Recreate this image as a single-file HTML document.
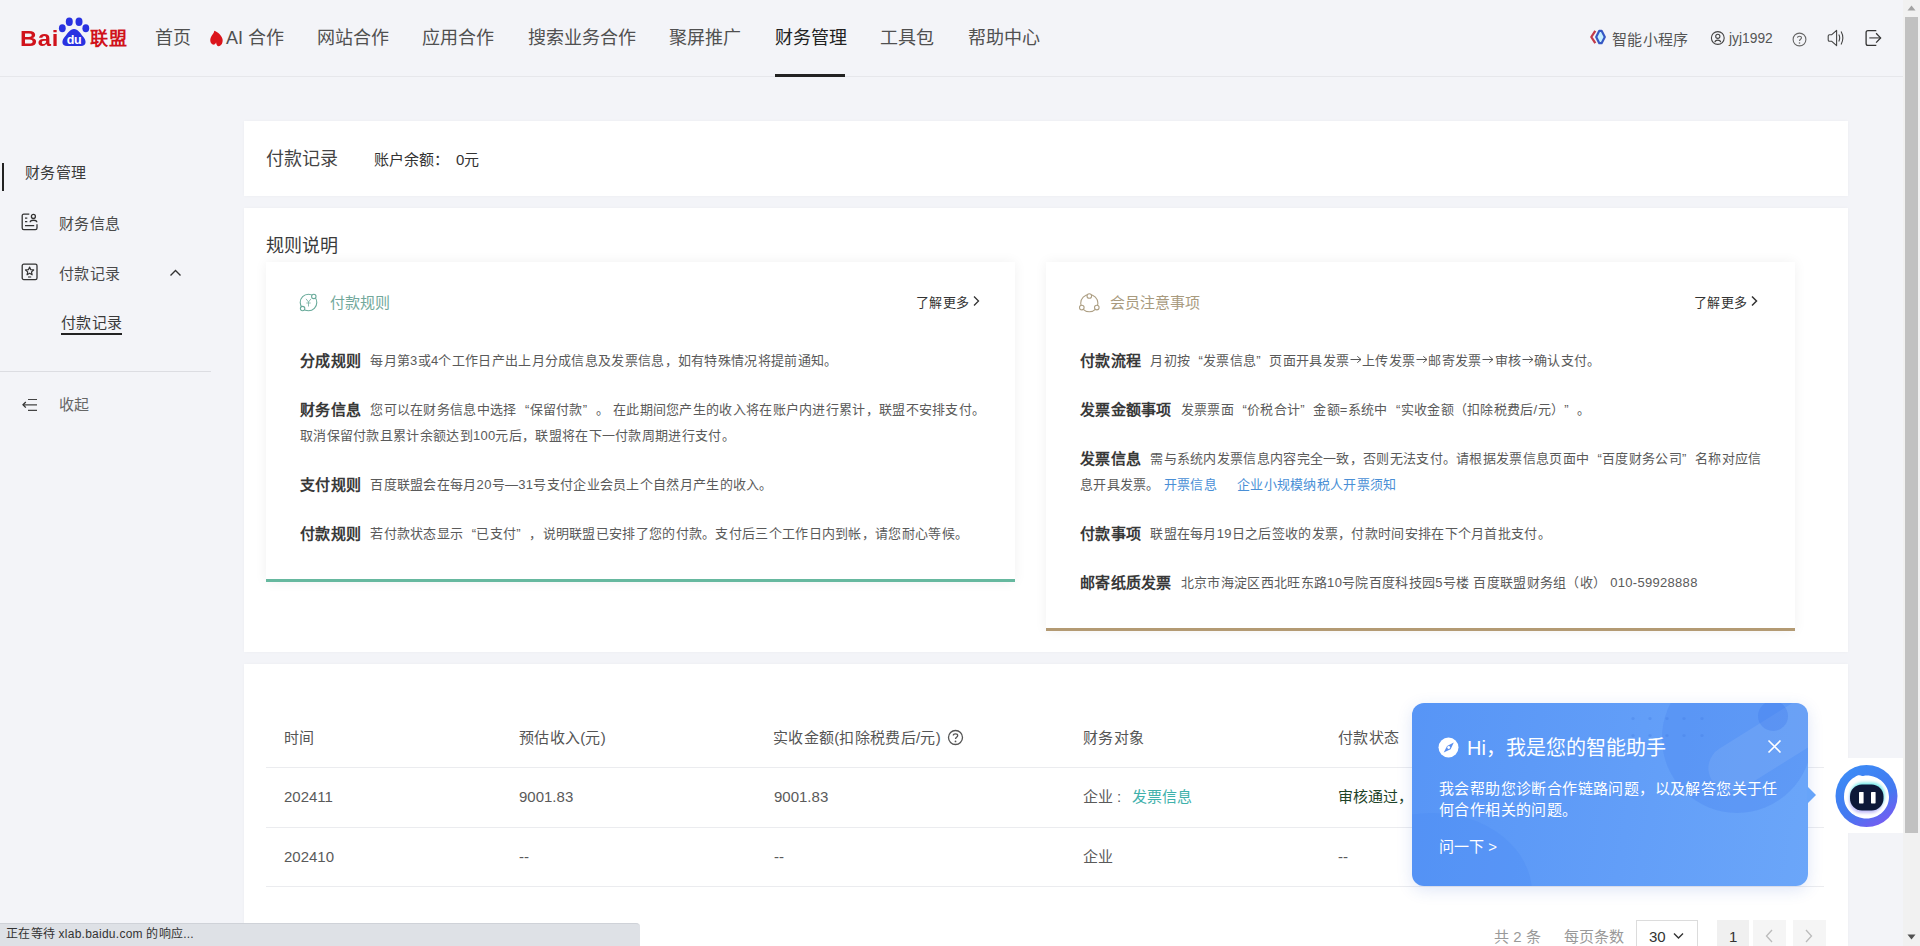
<!DOCTYPE html>
<html lang="zh-CN"><head><meta charset="utf-8">
<style>
*{margin:0;padding:0;box-sizing:border-box}
html,body{width:1920px;height:946px;overflow:hidden;background:#f3f4f8;font-family:"Liberation Sans",sans-serif;color:#333}
.a{position:absolute;white-space:nowrap}
#hdr{position:absolute;left:0;top:0;width:1903px;height:77px;border-bottom:1px solid #e6e7eb}
.nav{font-size:18px;color:#505050;line-height:18px;top:29px}
.card{position:absolute;background:#fff;box-shadow:0 0 3px rgba(0,0,0,0.03)}
.ic{position:absolute;background:#fff;box-shadow:0 0 12px rgba(0,0,0,0.06)}
.more{font-size:13px;line-height:13px;color:#333;letter-spacing:0.3px}
.rules{position:absolute;white-space:nowrap;font-size:13px;letter-spacing:0.3px;line-height:26px;color:#5a5a5a}
.rules p{margin-bottom:23px}
.rules b{font-size:15px;color:#383838;vertical-align:top;margin-right:9px;font-weight:bold}
.ql,.qr,.qc{font-style:normal;display:inline-block;width:1em}.ql{text-align:right}.qr{text-align:left}.qc{text-align:center}
.lk{color:#4a8fd6}
.th{font-size:15px;line-height:15px;color:#555;top:730px;letter-spacing:0.3px}
.td{font-size:15px;line-height:15px;color:#5a5a5a}
.pg{font-size:15px;line-height:15px;margin-top:1px}
#sb{position:absolute;left:1903px;top:0;width:17px;height:946px;background:#f1f1f1}
</style></head><body>
<div id="hdr">
  <!-- logo -->
  <div class="a" style="left:20px;top:28px;font-size:22px;font-weight:bold;color:#d0121b;line-height:22px;letter-spacing:0.6px;transform:scaleX(1.08);transform-origin:0 0">Bai</div>
  <svg class="a" style="left:57px;top:16px" width="34" height="32" viewBox="0 0 34 32">
    <ellipse cx="5.3" cy="12.3" rx="3.4" ry="4" fill="#2932e1"/>
    <ellipse cx="12.3" cy="5.8" rx="3.5" ry="4.2" fill="#2932e1"/>
    <ellipse cx="22" cy="5.8" rx="3.5" ry="4.2" fill="#2932e1"/>
    <ellipse cx="28.8" cy="12.3" rx="3.4" ry="4" fill="#2932e1"/>
    <path d="M17 13 C13 13 11 17 8 20.5 C4.5 24 4 30 10 30 L24 30 C30 30 29.5 24 26 20.5 C23 17 21 13 17 13Z" fill="#2932e1"/>
    <text x="17" y="28.3" font-size="12.5" font-weight="bold" fill="#fff" text-anchor="middle" font-family="Liberation Sans" letter-spacing="-0.3">du</text>
  </svg>
  <div class="a" style="left:90px;top:30px;font-size:18px;font-weight:bold;color:#d0121b;line-height:18px;letter-spacing:1px">联盟</div>

  <div class="a nav" style="left:155px">首页</div>
  <svg class="a" style="left:209px;top:30px" width="15" height="17" viewBox="0 0 15 17"><path d="M5.3 0.8 C8.5 2 12.5 5 13.5 9 C14.3 12.5 12.3 16.2 9.6 16.3 C8 16.3 7.3 14.5 7.1 12.6 C6.6 14 5.2 15.1 3.8 14.6 C1.3 13.3 0.6 10 2 7 C3.2 4.8 5.3 3 5.3 0.8Z" fill="#db141c"/></svg>
  <div class="a nav" style="left:226px">AI 合作</div>
  <div class="a nav" style="left:317px">网站合作</div>
  <div class="a nav" style="left:422px">应用合作</div>
  <div class="a nav" style="left:528px">搜索业务合作</div>
  <div class="a nav" style="left:669px">聚屏推广</div>
  <div class="a nav" style="left:775px;color:#222">财务管理</div>
  <div class="a" style="left:775px;top:74px;width:70px;height:3px;background:#222"></div>
  <div class="a nav" style="left:880px">工具包</div>
  <div class="a nav" style="left:968px">帮助中心</div>

  <!-- right -->
  <svg class="a" style="left:1589px;top:29px" width="18" height="16" viewBox="0 0 18 16"><path d="M6.3 1.8 L2.3 8 L6.3 14.2" stroke="#c23a4a" stroke-width="2.3" fill="none" stroke-linejoin="round"/><path d="M10.3 1.8 L12.6 1.8 L15.8 8 L12.6 14.2 L10.3 14.2 L7.2 8Z" stroke="#3558c4" stroke-width="2.2" fill="#c6efff" stroke-linejoin="round"/></svg>
  <div class="a" style="left:1612px;top:32px;font-size:15px;line-height:15px;color:#555;letter-spacing:0.35px">智能小程序</div>
  <svg class="a" style="left:1710px;top:30px" width="16" height="16" viewBox="0 0 16 16"><circle cx="7.8" cy="8" r="6.4" stroke="#444" stroke-width="1.1" fill="none"/><circle cx="7.8" cy="6.3" r="2.1" stroke="#444" stroke-width="1.1" fill="none"/><path d="M4.9 12.3 C5.2 9.4 10.4 9.4 10.7 12.3" stroke="#444" stroke-width="1.1" fill="none"/></svg>
  <div class="a" style="left:1729px;top:30.5px;font-size:13.8px;line-height:15px;color:#555">jyj1992</div>
  <svg class="a" style="left:1792px;top:32px" width="15" height="15" viewBox="0 0 15 15"><circle cx="7.5" cy="7.5" r="6.4" stroke="#666" stroke-width="1.1" fill="none"/><path d="M5.5 5.8 C5.5 3.8 9.5 3.8 9.5 5.8 C9.5 7.3 7.5 7.3 7.5 9" stroke="#666" stroke-width="1.1" fill="none"/><circle cx="7.5" cy="11" r="0.8" fill="#666"/></svg>
  <svg class="a" style="left:1827px;top:29px" width="18" height="18" viewBox="0 0 18 18"><path d="M1.2 7 Q1.2 5.7 2.5 5.7 L4.8 5.7 L9.6 1.3 L9.6 16.7 L4.8 12.3 L2.5 12.3 Q1.2 12.3 1.2 11Z" stroke="#444" stroke-width="1.1" fill="none" stroke-linejoin="round"/><path d="M11.8 5.6 Q13.6 9 11.8 12.4 M14.1 2.6 Q17.6 9 14.1 15.4" stroke="#444" stroke-width="1.1" fill="none"/></svg>
  <svg class="a" style="left:1865px;top:29px" width="17" height="18" viewBox="0 0 17 18"><path d="M11.3 1.6 H3 Q1.1 1.6 1.1 3.5 V14.5 Q1.1 16.4 3 16.4 H11.3" stroke="#333" stroke-width="1.3" fill="none"/><path d="M4.3 8.9 H15.3" stroke="#555" stroke-width="1.3"/><path d="M11.1 4.2 L15.6 8.9 L11.1 13.6" stroke="#333" stroke-width="1.3" fill="none"/></svg>
</div>

<!-- sidebar -->
<div class="a" style="left:2px;top:163px;width:2px;height:28px;background:#222"></div>
<div class="a" style="left:25px;top:165px;font-size:15px;line-height:15px;color:#3a3a3a;letter-spacing:0.4px">财务管理</div>
<div class="a" style="left:59px;top:216px;font-size:15px;line-height:15px;color:#4a4a4a;letter-spacing:0.4px">财务信息</div>
<div class="a" style="left:59px;top:266px;font-size:15px;line-height:15px;color:#4a4a4a;letter-spacing:0.4px">付款记录</div>
<div class="a" style="left:61px;top:315px;font-size:15px;line-height:15px;color:#3a3a3a;letter-spacing:0.4px">付款记录</div>
<div class="a" style="left:61px;top:333px;width:61px;height:2px;background:#222"></div>
<div class="a" style="left:0;top:371px;width:211px;height:1px;background:#dcdde2"></div>
<div class="a" style="left:59px;top:397px;font-size:15px;line-height:15px;color:#666;letter-spacing:0.4px">收起</div>

<!-- card 1 -->
<div class="card" style="left:244px;top:121px;width:1604px;height:75px"></div>
<div class="a" style="left:266px;top:150px;font-size:18px;line-height:18px;color:#444">付款记录</div>
<div class="a" style="left:374px;top:152px;font-size:15px;line-height:15px;color:#333">账户余额<i class="qr">：</i></div><div class="a" style="left:456px;top:152px;font-size:15px;line-height:15px;color:#333">0元</div>

<!-- card 2 -->
<div class="card" style="left:244px;top:208px;width:1604px;height:444px"></div>
<div class="a" style="left:266px;top:237px;font-size:18px;line-height:18px;color:#3a3a3a">规则说明</div>

<!-- card 3 -->
<div class="card" style="left:244px;top:664px;width:1604px;height:282px"></div>


<!-- sidebar icons -->
<svg class="a" style="left:21px;top:213px" width="17" height="18" viewBox="0 0 17 18"><path d="M8.3 1.2 H2.8 Q1.2 1.2 1.2 2.8 V15 Q1.2 16.6 2.8 16.6 H14.4 Q16 16.6 16 15 V11.2" stroke="#333" stroke-width="1.3" fill="none"/><circle cx="12.4" cy="3.4" r="2" stroke="#333" stroke-width="1.3" fill="none"/><path d="M9.2 9.2 C9.2 6.6 15.8 6.6 15.8 9.2" stroke="#333" stroke-width="1.3" fill="none"/><path d="M4 5.2 H6.3 M4 8.6 H6.3 M4 12.6 H13.2" stroke="#333" stroke-width="1.3"/></svg>
<svg class="a" style="left:21px;top:262px" width="17" height="19" viewBox="0 0 17 19"><rect x="1.2" y="2.2" width="14.8" height="15.4" rx="1.6" stroke="#333" stroke-width="1.3" fill="none"/><path d="M8.60 5.00 L9.78 7.68 L12.69 7.97 L10.50 9.92 L11.13 12.78 L8.60 11.30 L6.07 12.78 L6.70 9.92 L4.51 7.97 L7.42 7.68Z" stroke="#333" stroke-width="1.2" fill="none" stroke-linejoin="round"/><path d="M7 15 H10.2" stroke="#555" stroke-width="1.3"/></svg>
<svg class="a" style="left:169px;top:267px" width="13" height="11" viewBox="0 0 13 11"><path d="M1.5 8.5 L6.5 3.5 L11.5 8.5" stroke="#333" stroke-width="1.4" fill="none"/></svg>
<svg class="a" style="left:21px;top:397px" width="17" height="16" viewBox="0 0 17 16"><path d="M7 2.5 H16 M2 7.8 H16 M7 13.3 H16" stroke="#444" stroke-width="1.2"/><path d="M4.8 5 L2 7.8 L4.8 10.6" stroke="#333" stroke-width="1.3" fill="none"/></svg>

<!-- inner card 1 -->
<div class="ic" style="left:266px;top:262px;width:749px;height:320px;border-bottom:3px solid #66b89f"></div>
<svg class="a" style="left:298px;top:292px" width="21" height="21" viewBox="0 0 21 21"><circle cx="10.5" cy="10.5" r="8.3" stroke="#6aab9b" stroke-width="1.1" fill="none"/><circle cx="15.8" cy="4.4" r="2.2" fill="#fff" stroke="#6aab9b" stroke-width="1.1"/><circle cx="4.6" cy="16.6" r="2.2" fill="#fff" stroke="#6aab9b" stroke-width="1.1"/><path d="M8 6.8 L10.5 10 L13 6.8 M10.5 10 L10.5 14.5 M8.3 11 L12.7 11" stroke="#7fb5a8" stroke-width="0.9" fill="none"/></svg>
<div class="a" style="left:330px;top:295px;font-size:15px;line-height:15px;color:#72a89b">付款规则</div>
<div class="a more" style="left:916px;top:296px">了解更多</div>
<svg class="a" style="left:972px;top:295px" width="9" height="12" viewBox="0 0 9 12"><path d="M2 1.5 L6.5 6 L2 10.5" stroke="#333" stroke-width="1.3" fill="none"/></svg>
<div class="rules" style="left:300px;top:348px">
  <p><b>分成规则</b>每月第3或4个工作日产出上月分成信息及发票信息，如有特殊情况将提前通知。</p>
  <p><b>财务信息</b>您可以在财务信息中选择<i class="ql">“</i>保留付款<i class="qr">”</i>。 在此期间您产生的收入将在账户内进行累计，联盟不安排支付。<br>取消保留付款且累计余额达到100元后，联盟将在下一付款周期进行支付。</p>
  <p><b>支付规则</b>百度联盟会在每月20号—31号支付企业会员上个自然月产生的收入。</p>
  <p><b>付款规则</b>若付款状态显示<i class="ql">“</i>已支付<i class="qr">”</i>，说明联盟已安排了您的付款。支付后三个工作日内到帐，请您耐心等候。</p>
</div>

<!-- inner card 2 -->
<div class="ic" style="left:1046px;top:262px;width:749px;height:369px;border-bottom:3px solid #b39a73"></div>
<svg class="a" style="left:1078px;top:292px" width="23" height="22" viewBox="0 0 23 22"><circle cx="11.3" cy="11.2" r="8.6" stroke="#ad9f84" stroke-width="1.1" fill="none"/><circle cx="11.3" cy="4" r="2.3" fill="#fff" stroke="#ad9f84" stroke-width="1.1"/><circle cx="3.8" cy="15.6" r="2.3" fill="#fff" stroke="#ad9f84" stroke-width="1.1"/><circle cx="18.8" cy="15.6" r="2.3" fill="#fff" stroke="#ad9f84" stroke-width="1.1"/></svg>
<div class="a" style="left:1110px;top:295px;font-size:15px;line-height:15px;color:#a89a7e">会员注意事项</div>
<div class="a more" style="left:1694px;top:296px">了解更多</div>
<svg class="a" style="left:1750px;top:295px" width="9" height="12" viewBox="0 0 9 12"><path d="M2 1.5 L6.5 6 L2 10.5" stroke="#333" stroke-width="1.5" fill="none"/></svg>
<div class="rules" style="left:1080px;top:348px">
  <p><b>付款流程</b>月初按<i class="ql">“</i>发票信息<i class="qr">”</i>页面开具发票<i class="qc"><svg width="12" height="8" viewBox="0 0 12 8" style="vertical-align:1px"><path d="M0.5 3.5 H11 M7.3 0.3 L11 3.5 L7.3 6.7" stroke="#555" stroke-width="1" fill="none"/></svg></i>上传发票<i class="qc"><svg width="12" height="8" viewBox="0 0 12 8" style="vertical-align:1px"><path d="M0.5 3.5 H11 M7.3 0.3 L11 3.5 L7.3 6.7" stroke="#555" stroke-width="1" fill="none"/></svg></i>邮寄发票<i class="qc"><svg width="12" height="8" viewBox="0 0 12 8" style="vertical-align:1px"><path d="M0.5 3.5 H11 M7.3 0.3 L11 3.5 L7.3 6.7" stroke="#555" stroke-width="1" fill="none"/></svg></i>审核<i class="qc"><svg width="12" height="8" viewBox="0 0 12 8" style="vertical-align:1px"><path d="M0.5 3.5 H11 M7.3 0.3 L11 3.5 L7.3 6.7" stroke="#555" stroke-width="1" fill="none"/></svg></i>确认支付。</p>
  <p><b>发票金额事项</b>发票票面<i class="ql">“</i>价税合计<i class="qr">”</i>金额=系统中<i class="ql">“</i>实收金额（扣除税费后/元）<i class="qr">”</i>。</p>
  <p><b>发票信息</b>需与系统内发票信息内容完全一致，否则无法支付。请根据发票信息页面中<i class="ql">“</i>百度财务公司<i class="qr">”</i>名称对应信<br>息开具发票。 <span class="lk">开票信息</span><span class="lk" style="margin-left:20px">企业小规模纳税人开票须知</span></p>
  <p><b>付款事项</b>联盟在每月19日之后签收的发票，付款时间安排在下个月首批支付。</p>
  <p><b>邮寄纸质发票</b>北京市海淀区西北旺东路10号院百度科技园5号楼 百度联盟财务组（收） 010-59928888</p>
</div>

<!-- table -->
<div class="a th" style="left:284px">时间</div>
<div class="a th" style="left:519px">预估收入(元)</div>
<div class="a th" style="left:773px">实收金额(扣除税费后/元)</div>
<svg class="a" style="left:947px;top:729px" width="17" height="17" viewBox="0 0 17 17"><circle cx="8.5" cy="8.5" r="7" stroke="#555" stroke-width="1.3" fill="none"/><path d="M6.3 6.6 C6.3 4.3 10.7 4.3 10.7 6.6 C10.7 8.3 8.5 8.3 8.5 10" stroke="#555" stroke-width="1.3" fill="none"/><circle cx="8.5" cy="12.4" r="0.9" fill="#555"/></svg>
<div class="a th" style="left:1083px">财务对象</div>
<div class="a th" style="left:1338px">付款状态</div>
<div class="a" style="left:266px;top:767px;width:1558px;height:1px;background:#ebecef"></div>
<div class="a td" style="left:284px;top:789px">202411</div>
<div class="a td" style="left:519px;top:789px">9001.83</div>
<div class="a td" style="left:774px;top:789px">9001.83</div>
<div class="a td" style="left:1083px;top:789px">企业<span style="display:inline-block;width:12px;text-align:center">:</span><span style="color:#3fb1ab;margin-left:7px">发票信息</span></div>
<div class="a td" style="left:1338px;top:789px;color:#1e4328">审核通过，</div>
<div class="a" style="left:266px;top:827px;width:1558px;height:1px;background:#ebecef"></div>
<div class="a td" style="left:284px;top:849px">202410</div>
<div class="a td" style="left:519px;top:849px">--</div>
<div class="a td" style="left:774px;top:849px">--</div>
<div class="a td" style="left:1083px;top:849px">企业</div>
<div class="a td" style="left:1338px;top:849px">--</div>
<div class="a" style="left:266px;top:886px;width:1558px;height:1px;background:#ebecef"></div>

<!-- pagination -->
<div class="a pg" style="left:1494px;top:928px;color:#999">共 2 条</div>
<div class="a pg" style="left:1564px;top:928px;color:#999">每页条数</div>
<div class="a" style="left:1636px;top:920px;width:62px;height:40px;border:1px solid #dcdcdc;background:#fff"></div>
<div class="a pg" style="left:1649px;top:928px;color:#333">30</div>
<svg class="a" style="left:1673px;top:932px" width="11" height="8" viewBox="0 0 11 8"><path d="M1 1.5 L5.5 6 L10 1.5" stroke="#333" stroke-width="1.4" fill="none"/></svg>
<div class="a" style="left:1717px;top:920px;width:32px;height:40px;background:#f0f0f0"></div>
<div class="a pg" style="left:1729px;top:928px;color:#333">1</div>
<div class="a" style="left:1753px;top:920px;width:33px;height:40px;background:#f5f5f5"></div>
<svg class="a" style="left:1764px;top:928px" width="10" height="16" viewBox="0 0 10 16"><path d="M8 2 L2.5 8 L8 14" stroke="#bbb" stroke-width="1.3" fill="none"/></svg>
<div class="a" style="left:1793px;top:920px;width:33px;height:40px;background:#f5f5f5"></div>
<svg class="a" style="left:1804px;top:928px" width="10" height="16" viewBox="0 0 10 16"><path d="M2 2 L7.5 8 L2 14" stroke="#bbb" stroke-width="1.3" fill="none"/></svg>


<!-- robot -->
<div class="a" style="left:1833px;top:758px;width:70px;height:75px;background:#fff;border-radius:12px 0 0 12px"></div>
<svg class="a" style="left:1834px;top:764px" width="66" height="66" viewBox="0 0 66 66">
  <defs>
    <linearGradient id="rg" x1="0.2" y1="0" x2="0.8" y2="1"><stop offset="0" stop-color="#3b8cf6"/><stop offset="0.6" stop-color="#4479f0"/><stop offset="1" stop-color="#7b58f2"/></linearGradient>
  </defs>
  <circle cx="32.5" cy="32" r="31" fill="url(#rg)"/>
  <path d="M32.5 11.5 C45 11.5 55 21 55 33 C55 45 45 54.5 32.5 54.5 C20 54.5 10 45 10 33 C10 23 15 16 21 13 C23 11 26 10.5 28 12 C29 12.3 30.5 11.5 32.5 11.5Z" fill="#fff"/>
  <filter id="bl" x="-30%" y="-30%" width="160%" height="160%"><feGaussianBlur stdDeviation="1.6"/></filter>
  <rect x="16.5" y="18.5" width="34" height="26" rx="12" fill="#58e6e6" opacity="0.8" filter="url(#bl)"/>
  <rect x="15.5" y="23" width="33" height="26" rx="12" fill="#7a6cf0" opacity="0.45" filter="url(#bl)"/>
  <rect x="16" y="20.5" width="33.5" height="26" rx="12" fill="#0d1838"/>
  <rect x="25" y="28" width="4.6" height="11.4" rx="0.6" fill="#fff"/>
  <rect x="37" y="28" width="4.6" height="11.4" rx="0.6" fill="#fff"/>
</svg>

<!-- chat popup -->
<div class="a" id="pop" style="left:1412px;top:703px;width:396px;height:183px;border-radius:12px;overflow:hidden;background:linear-gradient(100deg,#5795f6 0%,#629ef8 55%,#6ba6f9 100%);box-shadow:0 4px 16px rgba(40,90,200,0.15)">
  <div class="a" style="left:-80px;top:110px;width:200px;height:160px;border-radius:50%;background:rgba(70,135,245,0.25)"></div>
  <div class="a" style="left:250px;top:-40px;width:150px;height:150px;border-radius:50%;background:rgba(70,130,240,0.3)"></div>
  <div class="a" style="left:290px;top:20px;width:130px;height:46px;border-radius:23px;background:rgba(255,255,255,0.08);transform:rotate(-32deg)"></div>
  <div class="a" style="left:346px;top:-2px;width:30px;height:30px;border-radius:50%;background:rgba(60,120,235,0.3)"></div>
  <svg class="a" style="left:0;top:0" width="396" height="60"><g fill="rgba(70,125,230,0.35)"><circle cx="221" cy="15.5" r="1.6"/><circle cx="221" cy="32.5" r="1.6"/><circle cx="238" cy="15.5" r="1.6"/><circle cx="238" cy="32.5" r="1.6"/><circle cx="255" cy="15.5" r="1.6"/><circle cx="255" cy="32.5" r="1.6"/><circle cx="272" cy="15.5" r="1.6"/><circle cx="272" cy="32.5" r="1.6"/><circle cx="290" cy="15.5" r="1.6"/><circle cx="290" cy="32.5" r="1.6"/></g></svg>
</div>
<svg class="a" style="left:1807px;top:786px" width="10" height="18" viewBox="0 0 10 18"><path d="M0 0 L9 9 L0 18Z" fill="#67a4f9"/></svg>
<svg class="a" style="left:1438px;top:737px" width="21" height="21" viewBox="0 0 21 21"><circle cx="10.5" cy="10.5" r="10" fill="#fff"/><path d="M15.8 5.4 L12.6 12.3 L5.7 15.6 L9.1 8.9Z" fill="#5a8ff0"/><circle cx="10.7" cy="10.5" r="1.4" fill="#fff"/></svg>
<div class="a" style="left:1467px;top:738px;font-size:20px;line-height:20px;color:#fff">Hi<i class="qr">，</i>我是您的智能助手</div>
<svg class="a" style="left:1767px;top:739px" width="15" height="15" viewBox="0 0 15 15"><path d="M1.5 1.5 L13.5 13.5 M13.5 1.5 L1.5 13.5" stroke="#fff" stroke-width="1.6"/></svg>
<div class="a" style="left:1439px;top:779px;width:345px;white-space:normal;font-size:15px;line-height:20.5px;color:#fff;font-weight:500;letter-spacing:0.4px">我会帮助您诊断合作链路问题，以及解答您关于任何合作相关的问题。</div>
<div class="a" style="left:1439px;top:838.5px;font-size:15px;line-height:15px;color:#fff;font-weight:500">问一下 &gt;</div>

<!-- status bar -->
<div class="a" style="left:0;top:923px;width:640px;height:23px;background:#dee1e6;border-top-right-radius:4px;border-top:1px solid #cfd2d8"></div>
<div class="a" style="left:6px;top:927px;font-size:12px;line-height:14px;color:#333;letter-spacing:0.25px">正在等待 xlab.baidu.com 的响应...</div>

<div id="sb"><div style="position:absolute;left:2px;top:17px;width:13px;height:816px;background:#c1c1c1"></div>
<svg style="position:absolute;left:4px;top:5px" width="9" height="6" viewBox="0 0 9 6"><path d="M0.5 5.5 L4.5 0.5 L8.5 5.5Z" fill="#a3a3a3"/></svg>
<svg style="position:absolute;left:4px;top:934px" width="9" height="6" viewBox="0 0 9 6"><path d="M0.5 0.5 L4.5 5.5 L8.5 0.5Z" fill="#505050"/></svg>
</div>
</body></html>
